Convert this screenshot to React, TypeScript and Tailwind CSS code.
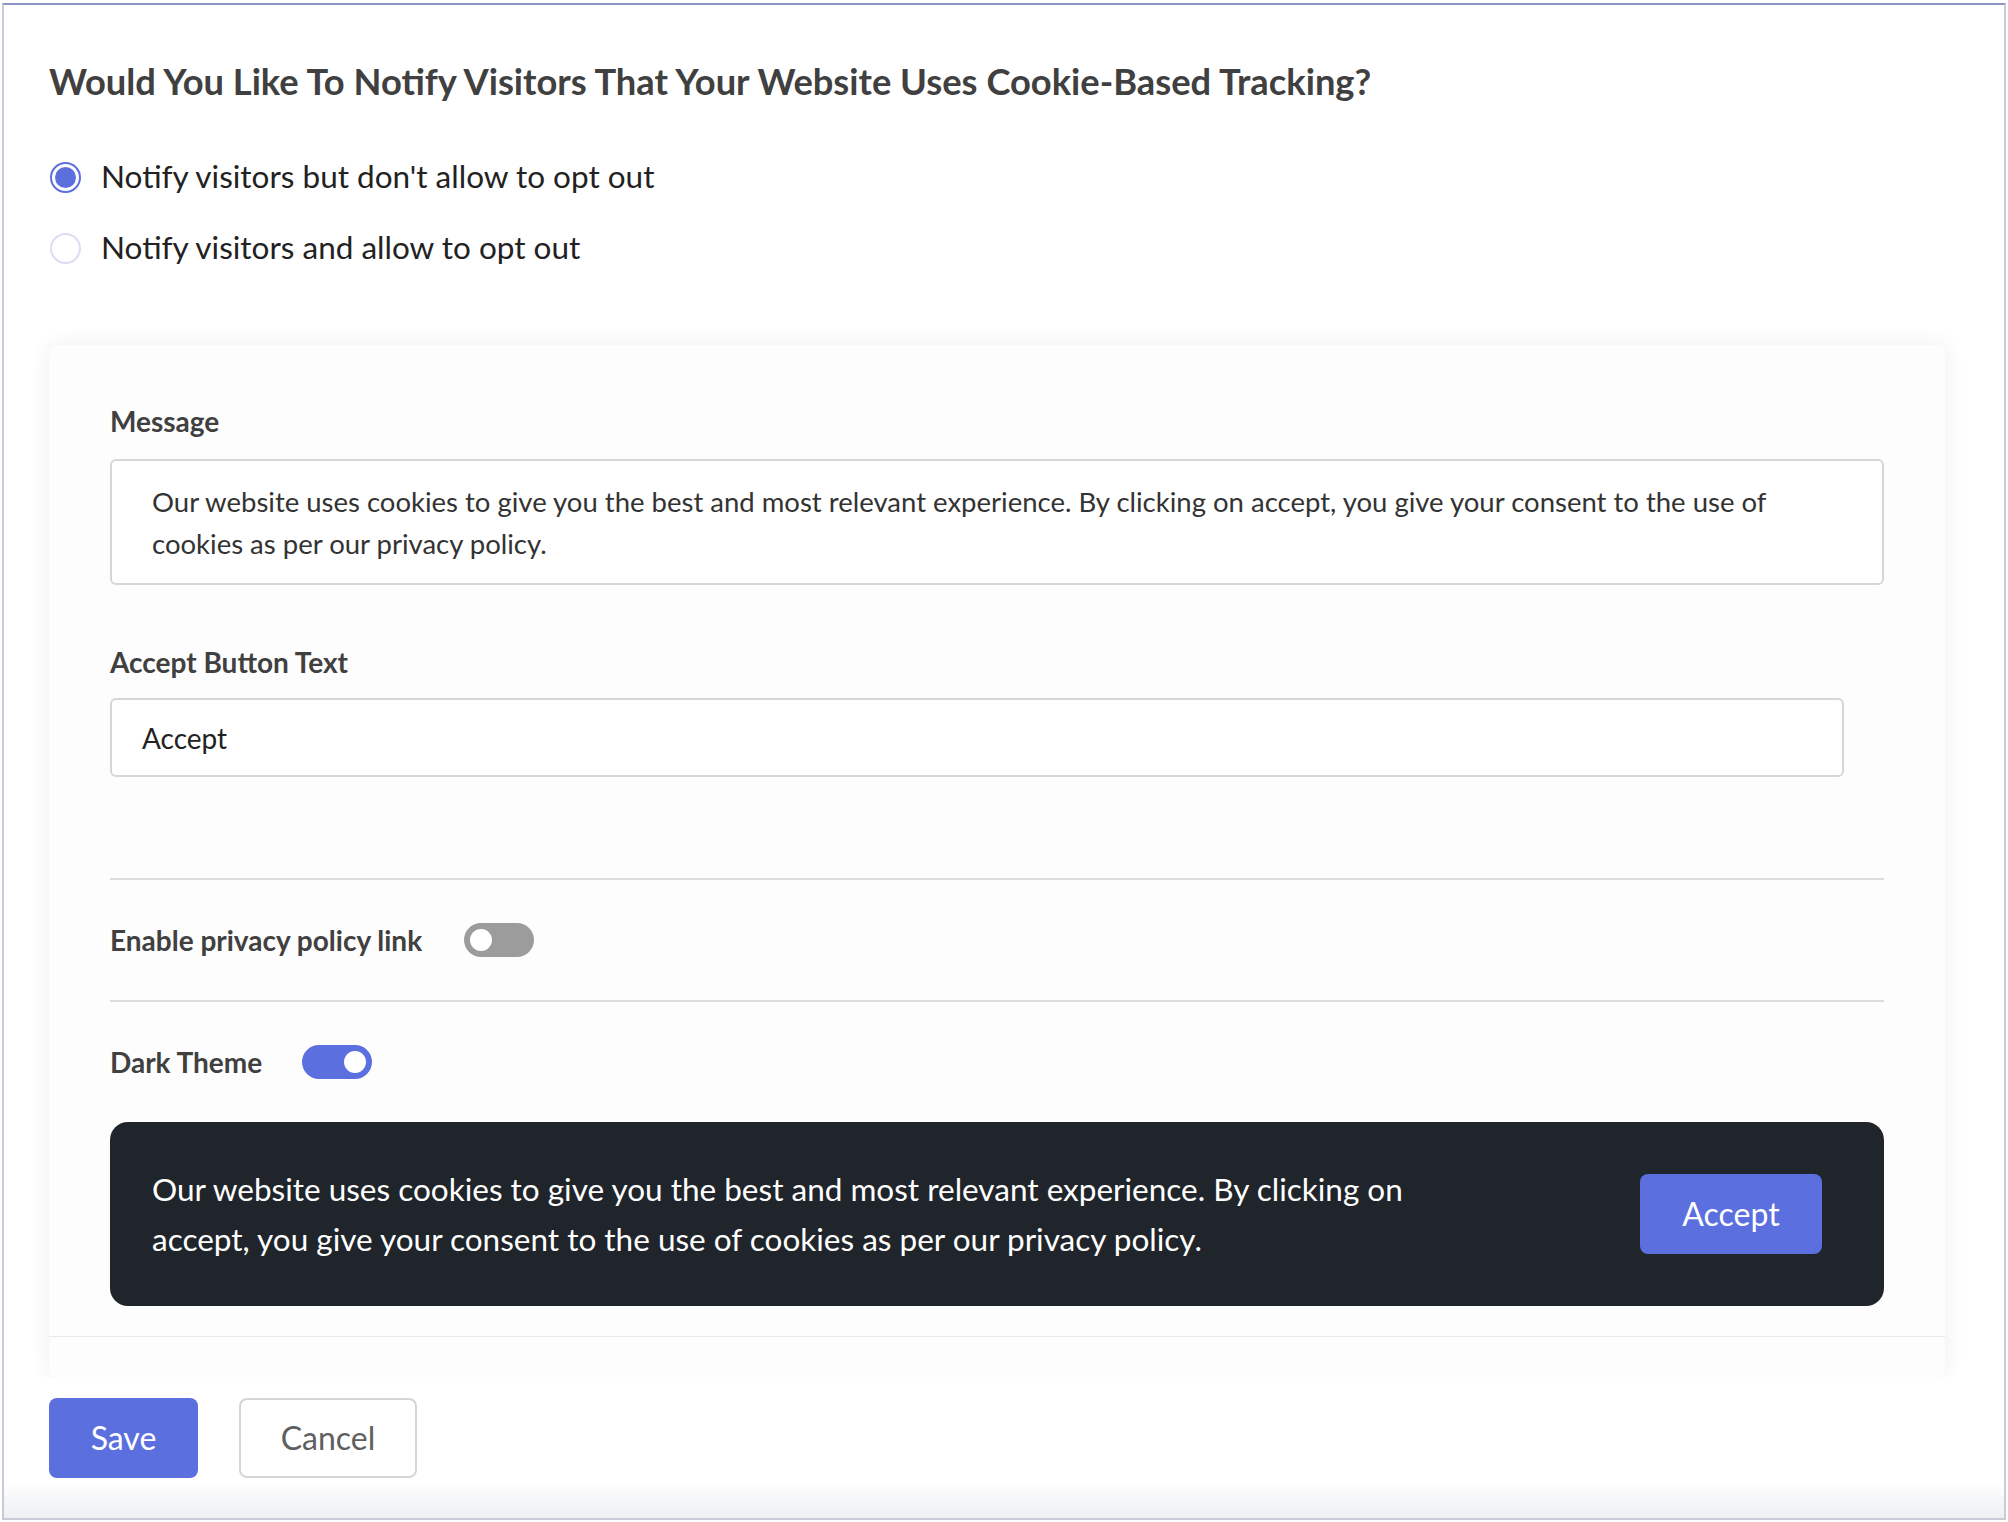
import { useState } from "react";

const MESSAGE =
  "Our website uses cookies to give you the best and most relevant experience. By clicking on accept, you give your consent to the use of cookies as per our privacy policy.";

function Radio({ checked, label }: { checked: boolean; label: string }) {
  return (
    <label className="flex h-[50px] items-center gap-[20px]">
      <span
        className={
          checked
            ? "flex h-[31px] w-[31px] items-center justify-center rounded-full border-2 border-[#5b6fde] bg-white"
            : "flex h-[31px] w-[31px] items-center justify-center rounded-full border-2 border-[#dcdcf4] bg-white"
        }
      >
        {checked && <span className="h-[21px] w-[21px] rounded-full bg-[#5b6fde]" />}
      </span>
      <span className="text-[31.5px] text-[#222222]">{label}</span>
    </label>
  );
}

function Toggle({ on }: { on: boolean }) {
  return (
    <span
      className={
        on
          ? "flex h-[34px] w-[70px] items-center justify-end rounded-full bg-[#5b6fde] px-[6px]"
          : "flex h-[34px] w-[70px] items-center justify-start rounded-full bg-[#9c9c9c] px-[6px]"
      }
    >
      <span className="h-[22px] w-[22px] rounded-full bg-white" />
    </span>
  );
}

export default function App() {
  const [option] = useState(0);

  return (
    <div className="h-[1522px] w-[2008px] bg-white px-[2px] pb-[2px] pt-[3px] font-['Lato',sans-serif]">
      <div className="relative flex h-full flex-col overflow-hidden border-2 border-[#c8ccd8] border-t-[#8b96c2] bg-white">
        <div className="flex flex-col px-[45px] pt-[54px]">
          <h1 className="h-[44px] text-[36.3px] font-bold leading-[44px] text-[#404040]">
            Would You Like To Notify Visitors That Your Website Uses Cookie-Based Tracking?
          </h1>

          {/* Notify options */}
          <div className="mt-[49px] flex flex-col gap-[21px] pl-[1px]">
            <Radio checked={option === 0} label="Notify visitors but don't allow to opt out" />
            <Radio checked={option === 1} label="Notify visitors and allow to opt out" />
          </div>

          {/* Settings card */}
          <div className="mt-[72px] w-[1896px] rounded-lg bg-[#fdfdfd] shadow-[0_0_22px_rgba(0,0,0,0.07)]">
            <div className="border-b border-[#e9e9e9] px-[61px] pb-[30px] pt-[58px]">
              <div className="h-[36px] text-[28px] font-bold leading-[36px] text-[#404040]">Message</div>
              <div className="mt-[20px] h-[126px] w-[1774px] rounded-md border-2 border-[#d6d6d6] bg-white px-[40px] pt-[20px] text-[27.5px] leading-[42px] text-[#333333]">
                {MESSAGE}
              </div>

              <div className="mt-[59px] h-[36px] text-[28px] font-bold leading-[36px] text-[#404040]">
                Accept Button Text
              </div>
              <div className="mt-[18px] flex h-[79px] w-[1734px] items-center rounded-md border-2 border-[#d6d6d6] bg-white px-[30px] text-[28px] text-[#222222]">
                Accept
              </div>

              <div className="mt-[101px] h-[2px] bg-[#dcdcdc]" />
              <div className="flex h-[120px] items-center gap-[42px]">
                <span className="text-[28px] font-bold text-[#404040]">Enable privacy policy link</span>
                <Toggle on={false} />
              </div>
              <div className="h-[2px] bg-[#dcdcdc]" />
              <div className="flex h-[120px] items-center gap-[40px]">
                <span className="text-[28px] font-bold text-[#404040]">Dark Theme</span>
                <Toggle on />
              </div>

              {/* Dark preview */}
              <div className="flex h-[184px] w-[1774px] items-center justify-between rounded-[18px] bg-[#20252b] pl-[42px] pr-[62px]">
                <p className="w-[1300px] text-[31.5px] leading-[50px] text-white">{MESSAGE}</p>
                <button className="h-[80px] w-[182px] rounded-lg bg-[#5b6fde] text-[32px] text-white">Accept</button>
              </div>
            </div>
            <div className="h-[40px]" />
          </div>
        </div>

        {/* Footer */}
        <div className="relative flex gap-[41px] bg-white px-[45px] pt-[21px]">
          <button className="h-[80px] w-[149px] rounded-lg bg-[#5b6fde] text-[32px] text-white">Save</button>
          <button className="h-[80px] w-[178px] rounded-lg border-2 border-[#d6d6d6] bg-white text-[32px] text-[#5f5f5f]">
            Cancel
          </button>
        </div>
        <div className="mt-auto h-[38px] bg-gradient-to-b from-white to-[#eef0f2]" />
      </div>
    </div>
  );
}
